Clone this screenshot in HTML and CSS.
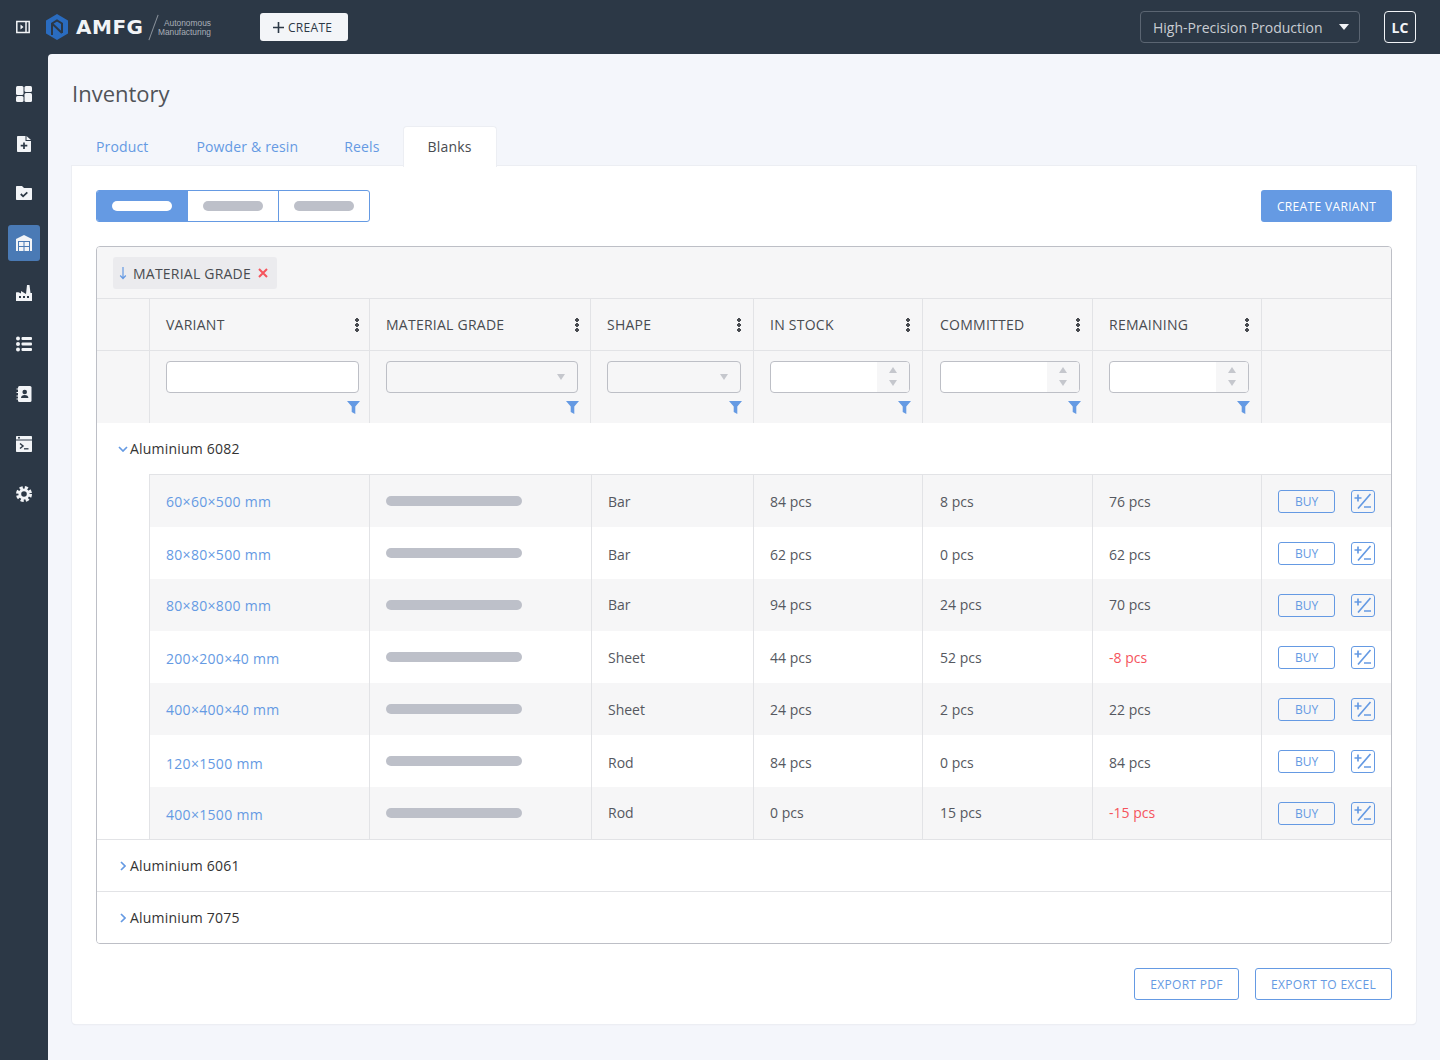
FILE: index.html
```html
<!DOCTYPE html>
<html lang="en">
<head>
<meta charset="utf-8">
<title>Inventory</title>
<link rel="stylesheet" href="styles.css">
</head>
<body>
<svg class="defs" width="0" height="0" aria-hidden="true">
  <symbol id="funnel" viewBox="0 0 13 13"><path d="M0 0h13L8.300 5.500V13L4.700 11V5.500z"/></symbol>
  <symbol id="plusminus" viewBox="0 0 22 21"><path d="M2.500 7h7M6 3.500v7M18.500 3L6 17.500M12 16h7" fill="none" stroke="currentColor" stroke-width="1.700"/></symbol>
</svg>
<header class="topbar">
  <div class="top-left">
    <svg class="panel-icon" viewBox="0 0 14 14" width="14" height="14"><path d="M.8 1.500h12.400v11H.8zM10 1.500v11" fill="none" stroke="#f2f4f7" stroke-width="1.500"/><path d="M4.500 4.500l3 2.500-3 2.500z" fill="#f2f4f7"/></svg>
    <svg class="logo-mark" viewBox="0 0 22 26" width="22" height="26"><path d="M11 0l11 6.500v13L11 26 0 19.500V6.500z" fill="#2a6cc0"/><path d="M6 21V9.500L11 6.500l5 3V19M6 9.500l10 9.500" fill="none" stroke="#2c3846" stroke-width="2"/></svg>
    <span class="logo-word">AMFG</span>
    <span class="logo-slash"></span>
    <span class="logo-sub">Autonomous<br>Manufacturing</span>
    <button class="create-btn"><svg viewBox="0 0 11 11" width="11" height="11"><path d="M5.500 0v11M0 5.500h11" stroke="#2c3846" stroke-width="1.600"/></svg>CREATE</button>
  </div>
  <div class="top-right">
    <div class="plant-select"><span>High-Precision Production</span><i class="caret-white"></i></div>
    <div class="avatar">LC</div>
  </div>
</header>
<div class="shell">
  <nav class="sidebar">
    <a class="nav-item"><svg viewBox="0 0 16 16" width="16" height="16"><rect x="0" y="0" width="7.500" height="9" rx="1.500"/><rect x="8.500" y="0" width="7.500" height="6" rx="1.500"/><rect x="0" y="10" width="7.500" height="6" rx="1.500"/><rect x="8.500" y="7" width="7.500" height="9" rx="1.500"/></svg></a>
    <a class="nav-item"><svg viewBox="0 0 16 16" width="16" height="16"><path d="M1 1C1 .400 1.500 0 2 0h7.500v5H15v10c0 .6-.5 1-1 1H2c-.5 0-1-.4-1-1z"/><path d="M10.500 0L15 4h-4.500z"/><path d="M8 6.500v6.500M4.700 9.700h6.600" stroke="#2c3846" stroke-width="1.700"/></svg></a>
    <a class="nav-item lift"><svg viewBox="0 0 16 16" width="16" height="16"><path d="M0 2c0-.6.400-1 1-1h5l2 2h7c.6 0 1 .4 1 1v10c0 .6-.4 1-1 1H1c-.6 0-1-.4-1-1z"/><path d="M4.800 9l2.300 2.300 4.200-4" fill="none" stroke="#2c3846" stroke-width="1.800"/></svg></a>
    <a class="nav-item lift active"><svg viewBox="0 0 16 16" width="16" height="16"><path d="M8 0l8 4v12h-2V6H2v10H0V4z"/><path d="M3 7h4.500v4H3zM8.500 7H13v4H8.500zM3 12h4.500v4H3zM8.500 12H13v4H8.500z"/></svg></a>
    <a class="nav-item lift"><svg viewBox="0 0 16 16" width="16" height="16"><path d="M0 16V7.500c1-.5 2-.5 3 0l2 1V6l5 3 1-9h2.500l1 8H16v8z"/><path d="M3 11h2v2H3zM7 11h2v2H7zM11 11h2v2h-2z" fill="#2c3846"/></svg></a>
    <a class="nav-item"><svg viewBox="0 0 16 16" width="16" height="16"><circle cx="2" cy="2.500" r="2"/><circle cx="2" cy="8" r="2"/><circle cx="2" cy="13.500" r="2"/><rect x="5.500" y="1" width="10.500" height="3" rx="1"/><rect x="5.500" y="6.500" width="10.500" height="3" rx="1"/><rect x="5.500" y="12" width="10.500" height="3" rx="1"/></svg></a>
    <a class="nav-item"><svg viewBox="0 0 16 16" width="16" height="16"><rect x="2" y="0" width="13.500" height="16" rx="1.500"/><path d="M.5 3h2M.5 6.500h2M.5 10h2M.5 13h2" stroke="#f2f4f7" stroke-width="1.200"/><circle cx="8.700" cy="6" r="2.300" fill="#2c3846"/><path d="M5 12c0-2 1.500-3 3.700-3s3.700 1 3.700 3z" fill="#2c3846"/></svg></a>
    <a class="nav-item"><svg viewBox="0 0 16 16" width="16" height="16"><path d="M1 0h14c.6 0 1 .4 1 1v2.500H0V1c0-.6.400-1 1-1zM0 4.500h16V15c0 .6-.4 1-1 1H1c-.6 0-1-.4-1-1z"/><circle cx="3" cy="1.800" r="1" fill="#2c3846"/><path d="M4 7.500L7 10l-3 2.500" fill="none" stroke="#2c3846" stroke-width="1.500"/><path d="M8 12.800h4.500" stroke="#2c3846" stroke-width="1.300"/></svg></a>
    <a class="nav-item"><svg viewBox="0 0 16 16" width="16" height="16"><circle cx="8" cy="8" r="6.300" fill="none" stroke="#f2f4f7" stroke-width="3.400" stroke-dasharray="3 1.950"/><circle cx="8" cy="8" r="4.200" fill="none" stroke="#f2f4f7" stroke-width="2.800"/></svg></a>
  </nav>
  <main class="main">
    <h1 class="title">Inventory</h1>
    <div class="tabs">
      <a class="tab">Product</a>
      <a class="tab">Powder &amp; resin</a>
      <a class="tab reels">Reels</a>
      <a class="tab current">Blanks</a>
    </div>
    <section class="card">
      <div class="toolbar">
        <div class="segments">
          <div class="segment on"><i class="pill"></i></div>
          <div class="segment"><i class="pill"></i></div>
          <div class="segment"><i class="pill"></i></div>
        </div>
        <button class="primary-btn">CREATE VARIANT</button>
      </div>
      <div class="table">
        <div class="group-bar">
          <div class="chip">
            <svg viewBox="0 0 8 14" width="8" height="14"><path d="M4 1v11.500M1.200 9.500L4 12.500l2.800-3" fill="none" stroke="#659ae3" stroke-width="1.200"/></svg>
            <span>MATERIAL GRADE</span>
            <svg viewBox="0 0 10 10" width="10" height="10"><path d="M1 1l8 8M9 1l-8 8" stroke="#f5545c" stroke-width="2"/></svg>
          </div>
        </div>
        <div class="grid head-row">
          <div class="cell"></div>
          <div class="cell"><div class="inner w-variant"><span>VARIANT</span><i class="kebab"></i></div></div>
          <div class="cell"><div class="inner w-grade"><span>MATERIAL GRADE</span><i class="kebab"></i></div></div>
          <div class="cell"><div class="inner w-shape"><span>SHAPE</span><i class="kebab"></i></div></div>
          <div class="cell"><div class="inner w-num"><span>IN STOCK</span><i class="kebab"></i></div></div>
          <div class="cell"><div class="inner w-num"><span>COMMITTED</span><i class="kebab"></i></div></div>
          <div class="cell"><div class="inner w-num"><span>REMAINING</span><i class="kebab"></i></div></div>
          <div class="cell"></div>
        </div>
        <div class="grid filter-row">
          <div class="cell"></div>
          <div class="cell"><div class="filter w-variant"><div class="field"></div><svg class="funnel"><use href="#funnel"/></svg></div></div>
          <div class="cell"><div class="filter w-grade"><div class="field dropdown"><i class="tri-down"></i></div><svg class="funnel"><use href="#funnel"/></svg></div></div>
          <div class="cell"><div class="filter w-shape"><div class="field dropdown"><i class="tri-down"></i></div><svg class="funnel"><use href="#funnel"/></svg></div></div>
          <div class="cell"><div class="filter w-num"><div class="field number"><div class="spin"><i class="tri-up"></i><i class="tri-down"></i></div></div><svg class="funnel"><use href="#funnel"/></svg></div></div>
          <div class="cell"><div class="filter w-num"><div class="field number"><div class="spin"><i class="tri-up"></i><i class="tri-down"></i></div></div><svg class="funnel"><use href="#funnel"/></svg></div></div>
          <div class="cell"><div class="filter w-num"><div class="field number"><div class="spin"><i class="tri-up"></i><i class="tri-down"></i></div></div><svg class="funnel"><use href="#funnel"/></svg></div></div>
          <div class="cell"></div>
        </div>
        <div class="group-row open">
          <svg viewBox="0 0 10 6" width="10" height="6"><path d="M1 1l4 4 4-4" fill="none" stroke="#659ae3" stroke-width="1.700"/></svg>
          <span>Aluminium 6082</span>
        </div>
        <div class="rows-rule"></div>
        <div class="rows">
          <div class="grid row">
            <div class="cell"></div><div class="cell link">60×60×500 mm</div><div class="cell"><i class="pill wide"></i></div><div class="cell">Bar</div><div class="cell">84 pcs</div><div class="cell">8 pcs</div><div class="cell">76 pcs</div>
            <div class="cell actions"><button class="buy">BUY</button><button class="adjust"><svg><use href="#plusminus"/></svg></button></div>
          </div>
          <div class="grid row r2">
            <div class="cell"></div><div class="cell link">80×80×500 mm</div><div class="cell"><i class="pill wide"></i></div><div class="cell">Bar</div><div class="cell">62 pcs</div><div class="cell">0 pcs</div><div class="cell">62 pcs</div>
            <div class="cell actions"><button class="buy">BUY</button><button class="adjust"><svg><use href="#plusminus"/></svg></button></div>
          </div>
          <div class="grid row r3">
            <div class="cell"></div><div class="cell link">80×80×800 mm</div><div class="cell"><i class="pill wide"></i></div><div class="cell">Bar</div><div class="cell">94 pcs</div><div class="cell">24 pcs</div><div class="cell">70 pcs</div>
            <div class="cell actions"><button class="buy">BUY</button><button class="adjust"><svg><use href="#plusminus"/></svg></button></div>
          </div>
          <div class="grid row r4">
            <div class="cell"></div><div class="cell link">200×200×40 mm</div><div class="cell"><i class="pill wide"></i></div><div class="cell">Sheet</div><div class="cell">44 pcs</div><div class="cell">52 pcs</div><div class="cell danger">-8 pcs</div>
            <div class="cell actions"><button class="buy">BUY</button><button class="adjust"><svg><use href="#plusminus"/></svg></button></div>
          </div>
          <div class="grid row">
            <div class="cell"></div><div class="cell link">400×400×40 mm</div><div class="cell"><i class="pill wide"></i></div><div class="cell">Sheet</div><div class="cell">24 pcs</div><div class="cell">2 pcs</div><div class="cell">22 pcs</div>
            <div class="cell actions"><button class="buy">BUY</button><button class="adjust"><svg><use href="#plusminus"/></svg></button></div>
          </div>
          <div class="grid row r6">
            <div class="cell"></div><div class="cell link">120×1500 mm</div><div class="cell"><i class="pill wide"></i></div><div class="cell">Rod</div><div class="cell">84 pcs</div><div class="cell">0 pcs</div><div class="cell">84 pcs</div>
            <div class="cell actions"><button class="buy">BUY</button><button class="adjust"><svg><use href="#plusminus"/></svg></button></div>
          </div>
          <div class="grid row r7">
            <div class="cell"></div><div class="cell link">400×1500 mm</div><div class="cell"><i class="pill wide"></i></div><div class="cell">Rod</div><div class="cell">0 pcs</div><div class="cell">15 pcs</div><div class="cell danger">-15 pcs</div>
            <div class="cell actions"><button class="buy">BUY</button><button class="adjust"><svg><use href="#plusminus"/></svg></button></div>
          </div>
        </div>
        <div class="group-row">
          <svg viewBox="0 0 6 10" width="6" height="10"><path d="M1 1l4 4-4 4" fill="none" stroke="#659ae3" stroke-width="1.700"/></svg>
          <span>Aluminium 6061</span>
        </div>
        <div class="group-row last">
          <svg viewBox="0 0 6 10" width="6" height="10"><path d="M1 1l4 4-4 4" fill="none" stroke="#659ae3" stroke-width="1.700"/></svg>
          <span>Aluminium 7075</span>
        </div>
      </div>
      <div class="card-foot">
        <button class="outline-btn export-pdf">EXPORT PDF</button>
        <button class="outline-btn export-excel">EXPORT TO EXCEL</button>
      </div>
    </section>
  </main>
</div>
</body>
</html>
```
FILE: styles.css
```css
* { box-sizing: border-box; }
html, body { margin: 0; height: 1060px; overflow: hidden; }
body { background: #2c3846; font-family: "Open Sans", sans-serif; font-size: 14px; color: #484b50; }
i { display: block; font-style: normal; }
button { font-family: inherit; cursor: pointer; padding: 0; background: none; }
.defs { position: absolute; }

.topbar { height: 54px; display: flex; justify-content: space-between; align-items: center; padding: 0 24px 0 16px; }
.top-left { display: flex; align-items: center; }
.top-right { display: flex; align-items: center; gap: 24px; }
.panel-icon { margin-right: 16px; }
.logo-mark { margin-right: 8px; }
.logo-word { font-family: "DejaVu Sans", sans-serif; font-weight: 700; font-size: 20px; color: #f2f4f7; width: 67px; letter-spacing: .5px; }
.logo-slash { width: 1px; height: 27px; background: #8a929c; transform: rotate(20deg); margin: 0 3px 0 10px; }
.logo-sub { font-family: "Liberation Sans", sans-serif; font-size: 8.400px; line-height: 9.500px; padding-top: 2px; color: #a9afb8; text-align: right; width: 54px; }
.create-btn { margin-left: 49px; width: 88px; height: 28px; border: 0; border-radius: 3px; background: #f3f5f8; color: #2c3846; font-size: 12px; font-weight: 500; letter-spacing: .3px; display: flex; align-items: center; gap: 4px; padding-left: 13px; }

.plant-select { width: 220px; height: 32px; border: 1px solid #5b6572; border-radius: 4px; display: flex; align-items: center; justify-content: space-between; padding: 0 10px 0 12px; color: #c9cdd3; font-size: 14px; }
.caret-white { width: 0; height: 0; border-left: 5px solid transparent; border-right: 5px solid transparent; border-top: 6px solid #f2f4f7; }
.avatar { width: 32px; height: 32px; border: 1px solid #f2f4f7; border-radius: 4px; color: #f2f4f7; font-weight: 700; font-size: 14px; display: flex; align-items: center; justify-content: center; }

.shell { display: flex; height: 1006px; }
.sidebar { width: 48px; flex: none; padding-top: 22px; display: flex; flex-direction: column; align-items: center; gap: 14px; }
.nav-item { width: 32px; height: 36px; border-radius: 3px; display: flex; align-items: center; justify-content: center; fill: #f2f4f7; }
.nav-item.lift { transform: translateY(-1px); }
.nav-item.active { background: #4a7ab5; }

.main { flex: 1; background: #f4f6fb; border-top-left-radius: 4px; padding: 24px 24px 0; }
.title { margin: 0 0 18px; font-size: 22px; line-height: 30px; font-weight: 400; color: #505358; }

.tabs { display: flex; height: 40px; }
.tab { padding: 0 24px; line-height: 41px; color: #659ae3; font-size: 14px; font-weight: 500; letter-spacing: .15px; }
.tab.reels { margin-left: -2px; }
.tab.current { width: 94px; background: #fff; color: #484b50; border-radius: 4px 4px 0 0; border: 1px solid #eceef3; border-bottom: 0; line-height: 39px; margin-left: -1px; margin-bottom: -1px; height: 41px; position: relative; }

.card { background: #fff; height: 858px; padding: 24px; border-radius: 0 0 4px 4px; box-shadow: 0 0 0 1px #eceef3, 0 1px 1px #dfe1e7; }
.toolbar { display: flex; justify-content: space-between; margin-bottom: 24px; }
.segments { width: 274px; height: 32px; border: 1px solid #659ae3; border-radius: 3px; display: flex; overflow: hidden; }
.segment { flex: 1; display: flex; align-items: center; justify-content: center; }
.segment + .segment { border-left: 1px solid #659ae3; }
.segment.on { background: #659ae3; }
.pill { width: 60px; height: 10px; border-radius: 5px; background: #bdc0c9; }
.segment.on .pill { background: #fff; }
.primary-btn { width: 131px; height: 32px; border: 0; border-radius: 3px; background: #659ae3; color: #fff; font-size: 12px; font-weight: 500; letter-spacing: .35px; }

.table { height: 698px; border: 1px solid #bdbfc6; border-radius: 4px; overflow: hidden; }
.group-bar { height: 52px; background: #f6f6f7; border-bottom: 1px solid #e2e3e6; padding: 10px 16px; }
.chip { display: inline-flex; align-items: center; height: 32px; width: 164px; border-radius: 3px; background: #ebebee; padding-left: 6px; color: #484b50; letter-spacing: .22px; }
.chip span { margin: 0 7px 0 6px; }

.grid { display: grid; grid-template-columns: 53px 220px 221px 163px 169px 170px 169px 1fr; }
.cell { border-right: 1px solid #e2e3e6; padding-left: 16px; }
.cell:last-child { border-right: 0; }
.cell:nth-child(6) { padding-left: 17px; }
.head-row { height: 52px; background: #f6f6f7; border-bottom: 1px solid #e2e3e6; letter-spacing: .25px; }
.head-row .cell { display: flex; align-items: center; }
.inner { display: flex; align-items: center; justify-content: space-between; }
.w-variant { width: 193px; }
.w-grade { width: 192px; }
.inner.w-grade { width: 193px; }
.w-shape { width: 134px; }
.w-num { width: 140px; }
.kebab { width: 4px; height: 14px; background: radial-gradient(circle at 2px 2px, #484b50 1.600px, transparent 2px) 0 0 / 4px 5px repeat-y; }

.filter-row { height: 72px; background: #f6f6f7; }
.filter-row .cell { padding-top: 10px; }
.filter { display: flex; flex-direction: column; align-items: flex-end; }
.field { width: 100%; height: 32px; border: 1px solid #bdbfc6; border-radius: 4px; background: #fff; display: flex; overflow: hidden; }
.funnel { width: 13px; height: 13px; margin: 8px -.5px 0 0; fill: #659ae3; }
.w-grade .funnel { margin-right: -1px; }
.field.dropdown { background: #f6f6f7; justify-content: flex-end; align-items: center; padding-right: 12px; }
.tri-down { width: 0; height: 0; border-left: 4.500px solid transparent; border-right: 4.500px solid transparent; border-top: 6.500px solid #c5c7cd; }
.tri-up { width: 0; height: 0; border-left: 4.500px solid transparent; border-right: 4.500px solid transparent; border-bottom: 6.500px solid #c5c7cd; }
.field.number { justify-content: flex-end; }
.spin { width: 32px; background: #f6f6f7; display: flex; flex-direction: column; align-items: center; gap: 7px; padding-top: 5px; }

.group-row { height: 52px; display: flex; align-items: center; padding-left: 23px; border-bottom: 1px solid #e2e3e6; color: #333; background: #fff; letter-spacing: .2px; }
.group-row span { margin-left: 4px; }
.group-row.open { height: 51px; border-bottom: 0; padding-left: 21px; }
.group-row.open span { margin-left: 2px; }
.group-row.last { height: 51px; border-bottom: 0; }
.rows-rule { height: 1px; margin-left: 52px; background: #e2e3e6; }
.rows { border-bottom: 1px solid #e2e3e6; }

.row { --v: 0px; --t: 0px; height: 52px; color: #555860; grid-template-columns: 53px 220px 222px 162px 169px 170px 169px 1fr; }
.r2 { --v: 1px; --t: 1px; }
.r3 { --t: -1px; }
.r4 { --v: 1px; }
.r6 { --v: 2px; --t: 1px; }
.r7 { --v: 1px; --t: -1px; }
.row .cell { height: 52px; line-height: 50px; padding-top: calc(2px + var(--t)); }
.row .cell.link { padding-top: calc(2px + var(--v)); color: #659ae3; letter-spacing: .3px; }
.row:nth-child(odd) .cell:nth-child(n+2) { background: #f6f6f7; }
.row .cell:nth-child(3) { padding-top: 21px; }
.danger { color: #f5545c; }
.pill.wide { width: 136px; }
.row .cell.actions { display: flex; align-items: center; gap: 16px; padding-top: 0; line-height: normal; }
.buy { width: 57px; height: 23px; border: 1px solid #659ae3; border-radius: 3px; color: #659ae3; font-size: 12px; line-height: 20px; padding-top: 1px; }
.adjust { width: 24px; height: 23px; border: 1px solid #659ae3; border-radius: 3px; color: #659ae3; display: flex; }
.adjust svg { width: 22px; height: 21px; }

.card-foot { display: flex; justify-content: flex-end; gap: 16px; margin-top: 24px; }
.outline-btn { height: 32px; border: 1px solid #659ae3; border-radius: 3px; color: #659ae3; font-size: 12px; font-weight: 500; letter-spacing: .3px; background: #fff; }
.export-pdf { width: 105px; }
.export-excel { width: 137px; }
```
